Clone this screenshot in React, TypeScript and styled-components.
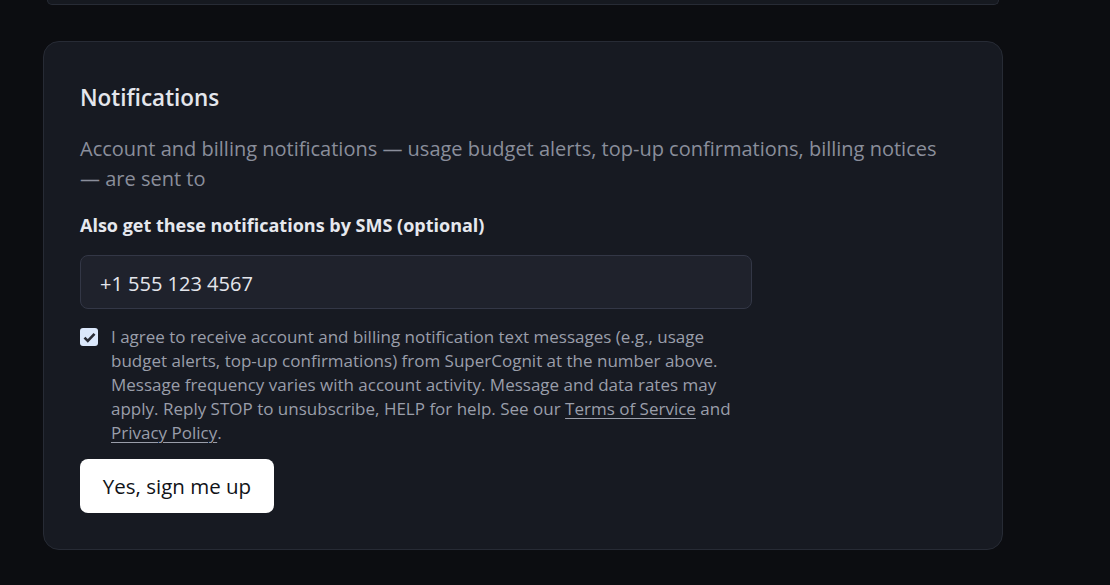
import React from "react";
import styled, { createGlobalStyle } from "styled-components";

const Global = createGlobalStyle`
  html, body { margin: 0; padding: 0; background: #0c0d11; }
  body { font-family: "Open Sans", "Noto Sans", sans-serif; color: #e6e8ee; }
  * { box-sizing: border-box; }
`;

const Page = styled.div`
  width: 1110px;
  height: 585px;
  overflow: hidden;
  background: #0c0d11;
  display: flex;
  flex-direction: column;
  align-items: flex-start;
  padding: 0 0 0 43px;
`;

const PrevCard = styled.div`
  width: 952px;
  height: 5px;
  margin: 0 0 0 4px;
  background: #161920;
  border: 1px solid #272b35;
  border-top: none;
  border-radius: 0 0 12px 12px;
`;

const Card = styled.section`
  margin-top: 36px;
  width: 960px;
  height: 509px;
  background: #171a22;
  border: 1px solid #272b35;
  border-radius: 16px;
  padding: 40px 36px 36px 36px;
  display: flex;
  flex-direction: column;
  align-items: flex-start;
`;

const Title = styled.h2`
  margin: 0;
  font-size: 22.5px;
  line-height: 32px;
  font-weight: 600;
  color: #e4e6ec;
`;

const Description = styled.p`
  margin: 20px 0 0 0;
  font-size: 20px;
  line-height: 30px;
  color: #8a8e9b;
  width: 872px;
`;

const Label = styled.label`
  margin-top: 18px;
  font-size: 18px;
  line-height: 26px;
  font-weight: 700;
  color: #e6e8ee;
`;

const PhoneInput = styled.input`
  margin-top: 17px;
  width: 672px;
  height: 54px;
  background: #1f222c;
  border: 1px solid #333746;
  border-radius: 8px;
  padding: 2px 19px 0 19px;
  font-family: "Open Sans", "Noto Sans", sans-serif;
  font-size: 20px;
  color: #e4e6ec;
  outline: none;
`;

const ConsentRow = styled.div`
  margin-top: 16px;
  width: 672px;
  display: flex;
  align-items: flex-start;
  gap: 13px;
`;

const CheckBox = styled.span`
  flex: none;
  width: 18px;
  height: 18px;
  margin-top: 3px;
  border-radius: 3px;
  background: #dbe8fc;
  display: flex;
  align-items: center;
  justify-content: center;
`;

const ConsentText = styled.p`
  margin: 0;
  font-size: 17px;
  line-height: 24px;
  color: #9a9eaa;
`;

const Link = styled.a`
  color: #9a9eaa;
  text-decoration: underline;
  text-underline-offset: 3px;
  text-decoration-thickness: 1px;
`;

const PrimaryButton = styled.button`
  margin-top: 14px;
  width: 194px;
  height: 54px;
  background: #ffffff;
  color: #111318;
  border: none;
  border-radius: 8px;
  font-family: "Open Sans", "Noto Sans", sans-serif;
  font-size: 20.5px;
  font-weight: 500;
  cursor: pointer;
`;

export default function App() {
  return (
    <>
      <Global />
      <Page>
        <PrevCard />
        <Card>
          <Title>Notifications</Title>
          <Description>
            Account and billing notifications — usage budget alerts, top-up confirmations, billing notices — are sent to
          </Description>
          <Label htmlFor="sms">Also get these notifications by SMS (optional)</Label>
          <PhoneInput id="sms" defaultValue="+1 555 123 4567" />
          <ConsentRow>
            <CheckBox role="checkbox" aria-checked="true">
              <svg width="13" height="11" viewBox="0 0 13 11">
                <path d="M1.5 5.6 L4.8 8.9 L11.5 1.8" fill="none" stroke="#2a2d36" strokeWidth="2.6" />
              </svg>
            </CheckBox>
            <ConsentText>
              I agree to receive account and billing notification text messages (e.g., usage budget alerts, top-up
              confirmations) from SuperCognit at the number above. Message frequency varies with account activity.
              Message and data rates may apply. Reply STOP to unsubscribe, HELP for help. See our{" "}
              <Link href="#">Terms of Service</Link> and <Link href="#">Privacy Policy</Link>.
            </ConsentText>
          </ConsentRow>
          <PrimaryButton>Yes, sign me up</PrimaryButton>
        </Card>
      </Page>
    </>
  );
}
